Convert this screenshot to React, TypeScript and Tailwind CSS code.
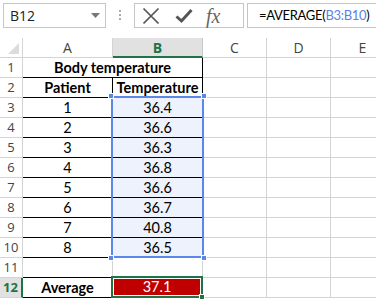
import React from 'react';

const ui = { fontFamily: '"Open Sans", "Noto Sans", sans-serif' };
const cellFont = { fontFamily: 'Lato, "Liberation Sans", sans-serif' };

const temps = ['36.4', '36.6', '36.3', '36.8', '36.6', '36.7', '40.8', '36.5'];

function Gray({ children, className = '' }: { children?: React.ReactNode; className?: string }) {
  return <div className={`h-[20px] border-r border-b border-[#d4d4d4] ${className}`}>{children}</div>;
}

function RowNum({ n }: { n: number }) {
  return (
    <div className="h-[20px] border-r border-b border-[#d4d4d4] flex items-center justify-center text-[13px] text-[#444]" style={ui}>
      {n}
    </div>
  );
}

export default function App() {
  const rows: React.ReactNode[] = [];

  // row 1 - merged title
  rows.push(
    <React.Fragment key="r1">
      <RowNum n={1} />
      <div className="col-span-2 h-[20px] border-r border-b border-r-black border-b-black flex items-center justify-center font-bold text-[14.5px] text-black" style={cellFont}>
        Body temperature
      </div>
      <Gray /><Gray /><Gray />
    </React.Fragment>
  );

  // row 2 - headings
  rows.push(
    <React.Fragment key="r2">
      <RowNum n={2} />
      <div className="h-[20px] border-r border-b border-black flex items-center justify-center font-bold text-[14.5px]" style={cellFont}>Patient</div>
      <div className="h-[20px] border-r border-b border-black flex items-center justify-center font-bold text-[14.5px]" style={cellFont}>Temperature</div>
      <Gray /><Gray /><Gray />
    </React.Fragment>
  );

  temps.forEach((t, i) => {
    rows.push(
      <React.Fragment key={`d${i}`}>
        <RowNum n={i + 3} />
        <div className="h-[20px] border-r border-b border-black flex items-center justify-center text-[14.5px]" style={cellFont}>{i + 1}</div>
        <div className="h-[20px] border-r border-b border-black bg-[#edf2fc] flex items-center justify-center text-[14.5px]" style={cellFont}>{t}</div>
        <Gray /><Gray /><Gray />
      </React.Fragment>
    );
  });

  // row 11 - empty
  rows.push(
    <React.Fragment key="r11">
      <RowNum n={11} />
      <div className="h-[20px] border-r border-b border-[#d4d4d4] border-b-black" />
      <div className="h-[20px] border-r border-b border-[#d4d4d4] border-b-black" />
      <Gray /><Gray /><Gray />
    </React.Fragment>
  );

  // row 12 - average
  rows.push(
    <React.Fragment key="r12">
      <div className="h-[20px] border-r-2 border-b border-r-[#217346] border-b-[#d4d4d4] bg-[#e1e1e1] flex items-center justify-center text-[13px] font-bold text-[#217346]" style={ui}>
        12
      </div>
      <div className="h-[20px] border-r border-b border-black flex items-center justify-center font-bold text-[14.5px]" style={cellFont}>Average</div>
      <div className="h-[20px] border-r border-b border-black">
        <div className="ml-[1px] mt-[1px] w-[86px] h-[16px] bg-[#c00000] flex items-center justify-center text-white text-[14.5px]" style={cellFont}>37.1</div>
      </div>
      <Gray /><Gray /><Gray />
    </React.Fragment>
  );

  return (
    <div className="relative w-[376px] h-[299px] overflow-hidden bg-white">
      {/* formula bar */}
      <div className="h-[38px] flex items-start pt-[3px] pl-[3px]">
        <div className="shrink-0 w-[103px] h-[25px] border border-[#c6c6c6] flex items-center justify-between pl-[6px] pr-[5px] text-[14px] text-[#222]" style={ui}>
          <span>B12</span>
          <svg width="9" height="5" viewBox="0 0 9 5"><path d="M0 0 L9 0 L4.5 5 Z" fill="#777" /></svg>
        </div>
        <div className="shrink-0 ml-[13px] mt-[7px] flex flex-col gap-[2px]">
          <div className="w-[2px] h-[2px] bg-[#aaa]" />
          <div className="w-[2px] h-[2px] bg-[#aaa]" />
          <div className="w-[2px] h-[2px] bg-[#aaa]" />
        </div>
        <div className="shrink-0 ml-[13px] w-[110px] h-[25px] border border-[#c6c6c6] flex items-center">
          <svg className="ml-[7px]" width="18" height="18" viewBox="0 0 18 18">
            <path d="M1.5 1.5 L16.5 16.5 M16.5 1.5 L1.5 16.5" stroke="#555" strokeWidth="1.7" />
          </svg>
          <svg className="ml-[15px]" width="18" height="16" viewBox="0 0 18 16">
            <path d="M1.5 8.5 L6.5 13 L16.5 2" stroke="#555" strokeWidth="3" fill="none" strokeLinejoin="miter" />
          </svg>
          <span className="ml-[13px] text-[20px] italic text-[#666] leading-none" style={{ fontFamily: '"Liberation Serif", serif' }}>fx</span>
        </div>
        <div className="ml-[3px] min-w-0 flex-1 h-[25px] border border-r-0 border-[#c6c6c6] flex items-center pl-[11px] text-[13px] tracking-[-0.3px] text-black whitespace-nowrap overflow-hidden" style={cellFont}>
          =AVERAGE(<span className="text-[#5a82e6]">B3:B10</span>)
        </div>
      </div>

      {/* sheet */}
      <div className="grid grid-cols-[23px_90px_90px_64px_64px_64px]">
        <div className="h-[20px] border-r border-b border-[#d4d4d4] flex items-end justify-end p-[3px]">
          <svg width="11" height="11" viewBox="0 0 11 11"><path d="M11 0 L11 11 L0 11 Z" fill="#dcdcdc" /></svg>
        </div>
        <div className="h-[20px] border-r border-b border-[#d4d4d4] flex items-center justify-center text-[14px] text-[#444]" style={ui}>A</div>
        <div className="h-[20px] border-r border-b-2 border-r-[#c8c8c8] border-b-[#217346] bg-[#e1e1e1] flex items-center justify-center text-[14px] font-bold text-[#217346]" style={ui}>B</div>
        <div className="h-[20px] border-r border-b border-[#d4d4d4] flex items-center justify-center text-[14px] text-[#444]" style={ui}>C</div>
        <div className="h-[20px] border-r border-b border-[#d4d4d4] flex items-center justify-center text-[14px] text-[#444]" style={ui}>D</div>
        <div className="h-[20px] border-r border-b border-[#d4d4d4] flex items-center justify-center text-[14px] text-[#444]" style={ui}>E</div>
        {rows}
      </div>

      {/* referenced range highlight */}
      <div className="absolute left-[111px] top-[96px] w-[93px] h-[162px] border-2 border-[#5b87ea]">
        <div className="absolute -left-[5px] -top-[5px] w-[6px] h-[6px] bg-[#5b87ea] border border-white" />
        <div className="absolute -right-[5px] -top-[5px] w-[6px] h-[6px] bg-[#5b87ea] border border-white" />
        <div className="absolute -left-[5px] -bottom-[5px] w-[6px] h-[6px] bg-[#5b87ea] border border-white" />
        <div className="absolute -right-[5px] -bottom-[5px] w-[6px] h-[6px] bg-[#5b87ea] border border-white" />
      </div>

      {/* active cell */}
      <div className="absolute left-[111px] top-[276px] w-[92px] h-[22px] border-2 border-[#217346]">
        <div className="absolute -right-[4px] -bottom-[4px] w-[6px] h-[6px] bg-[#217346] border border-white" />
      </div>
    </div>
  );
}
